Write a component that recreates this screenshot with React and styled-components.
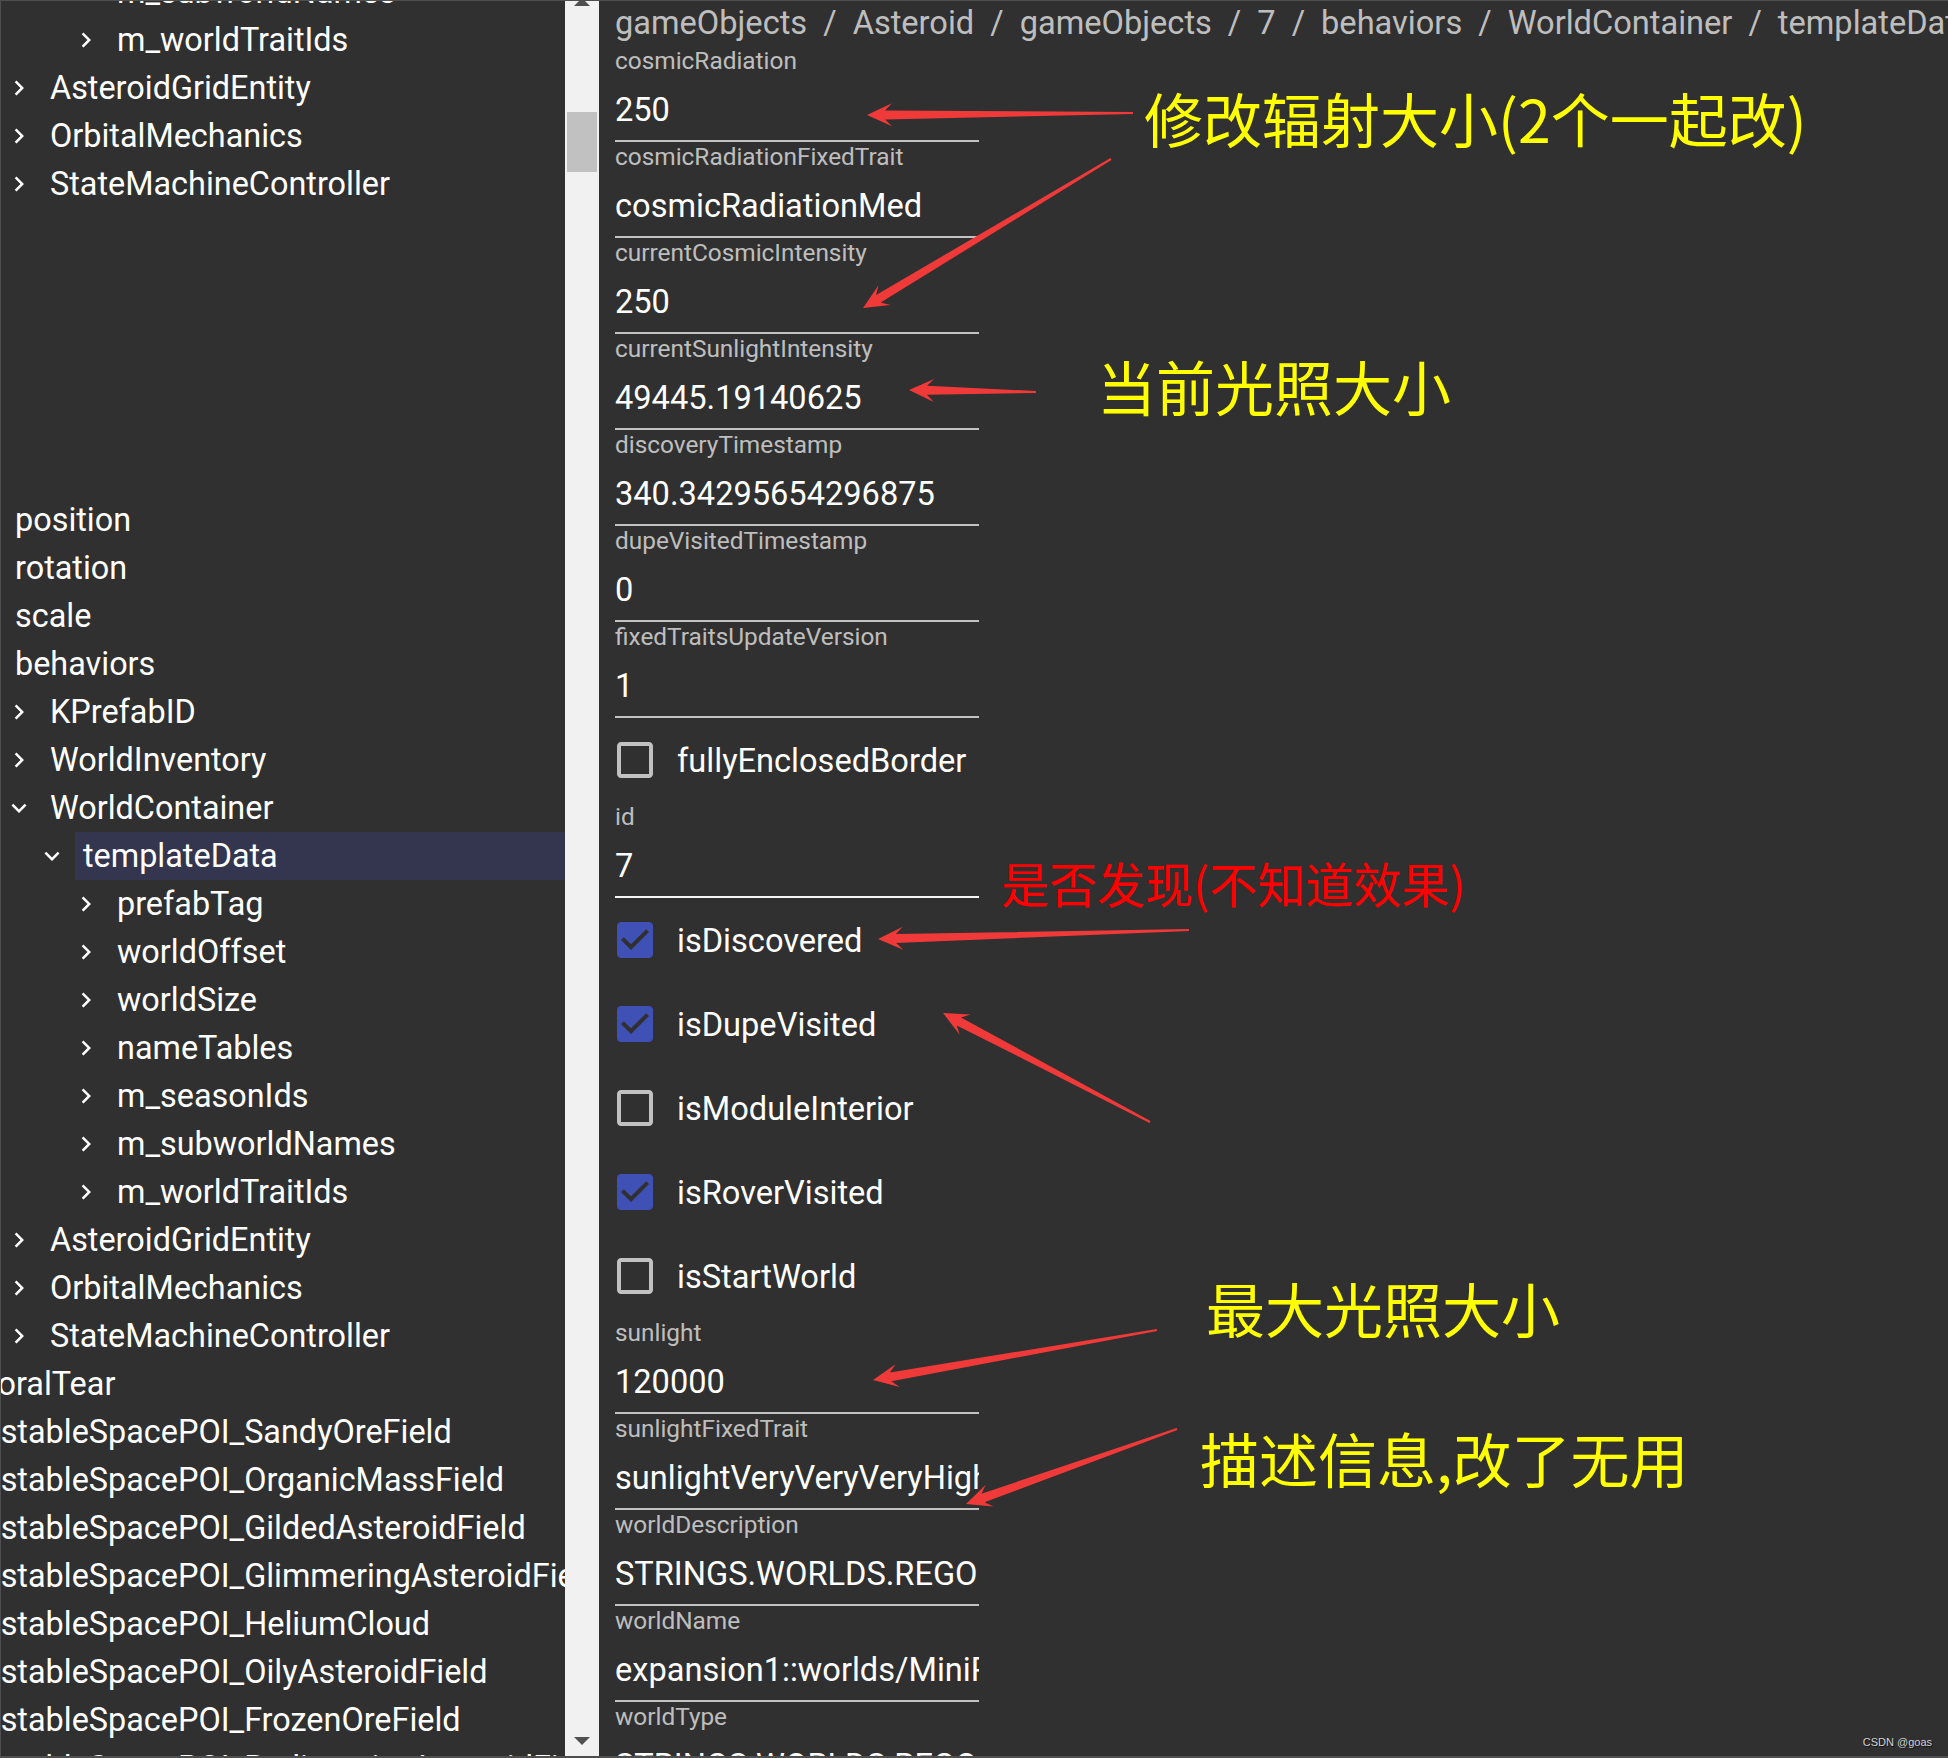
import React from 'react';
import styled, { createGlobalStyle } from 'styled-components';

const GlobalStyle = createGlobalStyle`
  html, body {
    margin: 0;
    padding: 0;
    background: #303030;
  }
  body {
    font-family: Roboto, "Noto Sans", "Liberation Sans", sans-serif;
  }
`;

const Page = styled.div`
  position: relative;
  display: flex;
  width: 1948px;
  height: 1758px;
  box-sizing: border-box;
  border-top: 1px solid #4f4f4f;
  border-left: 1px solid #4f4f4f;
  border-bottom: 2px solid #4f4f4f;
  background: #303030;
  color: #fff;
  overflow: hidden;
`;

/* ---------- left tree ---------- */

const TreePanel = styled.div`
  flex: none;
  width: 564px;
  display: flex;
  flex-direction: column;
  overflow: hidden;
`;

const TreeList = styled.div`
  display: flex;
  flex-direction: column;
  margin-top: ${(p) => p.$offset || 0}px;
`;

const Row = styled.div`
  flex: none;
  display: flex;
  align-items: center;
  height: 48px;
  margin-left: ${(p) => p.$x - 47}px;
  white-space: nowrap;
`;

const Toggle = styled.span`
  flex: none;
  width: 30px;
  height: 48px;
  margin-right: 8px;
  display: flex;
  align-items: center;
  justify-content: center;

  svg {
    width: 32px;
    height: 32px;
    fill: #fff;
  }
`;

const RowLabel = styled.span`
  flex: 1;
  padding-left: 8px;
  font-size: 32.4px;
  line-height: 48px;
  height: 48px;
  color: #fff;
  background: ${(p) => (p.$selected ? '#33364e' : 'transparent')};
`;

const Gap = styled.div`
  flex: none;
  height: ${(p) => p.$h}px;
`;

/* ---------- scrollbar ---------- */

const ScrollTrack = styled.div`
  flex: none;
  width: 34px;
  background: #f1f1f1;
  display: flex;
  flex-direction: column;
  align-items: center;
`;

const ArrowUp = styled.div`
  margin-top: -3px;
  width: 0;
  height: 0;
  border-left: 8px solid transparent;
  border-right: 8px solid transparent;
  border-bottom: 8px solid #505050;
`;

const Thumb = styled.div`
  margin-top: 106px;
  width: 30px;
  height: 60px;
  background: #c1c1c1;
`;

const ArrowDown = styled.div`
  margin-top: auto;
  margin-bottom: 11px;
  width: 0;
  height: 0;
  border-left: 8px solid transparent;
  border-right: 8px solid transparent;
  border-top: 8px solid #505050;
`;

/* ---------- right form ---------- */

const Main = styled.div`
  flex: 1;
  min-width: 0;
  padding-left: 16px;
  display: flex;
  flex-direction: column;
  overflow: hidden;
`;

const Crumbs = styled.div`
  flex: none;
  height: 45px;
  line-height: 44px;
  font-size: 32.6px;
  color: rgba(255, 255, 255, 0.7);
  white-space: nowrap;
  display: flex;
`;

const Sep = styled.span`
  margin: 0 16px;
`;

const Field = styled.div`
  flex: none;
  width: 364px;
  height: 96px;
  box-sizing: border-box;
  display: flex;
  flex-direction: column;
  border-bottom: 2px solid ${(p) => (p.$active ? '#f4f4f4' : 'rgba(255, 255, 255, 0.7)')};
`;

const FieldLabel = styled.div`
  margin-top: 3px;
  height: 24px;
  font-size: 24.4px;
  line-height: 24px;
  color: rgba(255, 255, 255, 0.7);
  white-space: nowrap;
`;

const FieldValue = styled.div`
  margin-top: 18px;
  height: 38px;
  font-size: 32.6px;
  line-height: 38px;
  color: #fff;
  white-space: nowrap;
  overflow: hidden;
`;

const CheckRow = styled.label`
  flex: none;
  display: flex;
  align-items: center;
  height: 84px;
  margin-left: -22px;
  font-size: 32.6px;
  color: #fff;
`;

const CheckText = styled.span`
  padding-top: 2px;
`;

const CheckButton = styled.span`
  flex: none;
  width: 84px;
  height: 84px;
  display: flex;
  align-items: center;
  justify-content: center;

  svg {
    width: 48px;
    height: 48px;
    fill: ${(p) => (p.$checked ? '#3f51b5' : 'rgba(255, 255, 255, 0.7)')};
  }
`;

/* ---------- annotations over the screenshot ---------- */

const Notes = styled.div`
  position: absolute;
  inset: 0;
  pointer-events: none;
`;

const Note = styled.span`
  position: absolute;
  left: ${(p) => p.$x}px;
  top: ${(p) => p.$y - p.$size * 0.6}px;
  font-family: "Noto Sans CJK SC", "Noto Sans", sans-serif;
  font-size: ${(p) => p.$size}px;
  line-height: 1;
  color: ${(p) => p.$color};
  white-space: nowrap;
`;

const ArrowLayer = styled.svg`
  position: absolute;
  left: 0;
  top: 0;
`;

const Watermark = styled.span`
  position: absolute;
  right: 16px;
  bottom: 8px;
  font-family: "Liberation Sans", Arial, sans-serif;
  font-size: 11px;
  color: #d2d2d2;
  text-shadow: 1px 1px 1px #111;
`;

const ChevronRight = () => (
  <svg viewBox="0 0 24 24">
    <path d="M10 6L8.59 7.41 13.17 12l-4.58 4.59L10 18l6-6z" />
  </svg>
);

const ExpandMore = () => (
  <svg viewBox="0 0 24 24">
    <path d="M16.59 8.59L12 13.17 7.41 8.59 6 10l6 6 6-6z" />
  </svg>
);

const CheckIcon = ({ checked }) => (
  <svg viewBox="0 0 24 24">
    {checked ? (
      <path
        fillRule="evenodd"
        d="M19 3H5c-1.11 0-2 .9-2 2v14c0 1.1.89 2 2 2h14c1.11 0 2-.9 2-2V5c0-1.1-.89-2-2-2zm-9 14l-5-5 1.41-1.41L10 14.17l7.59-7.59L19 8l-9 9z"
      />
    ) : (
      <path d="M19 5v14H5V5h14m0-2H5c-1.1 0-2 .9-2 2v14c0 1.1.9 2 2 2h14c1.1 0 2-.9 2-2V5c0-1.1-.9-2-2-2z" />
    )}
  </svg>
);

const topRows = [
  { x: 117, arrow: 'right', text: 'm_subworldNames' },
  { x: 117, arrow: 'right', text: 'm_worldTraitIds' },
  { x: 50, arrow: 'right', text: 'AsteroidGridEntity' },
  { x: 50, arrow: 'right', text: 'OrbitalMechanics' },
  { x: 50, arrow: 'right', text: 'StateMachineController' },
];

const mainRows = [
  { x: 15, text: 'position' },
  { x: 15, text: 'rotation' },
  { x: 15, text: 'scale' },
  { x: 15, text: 'behaviors' },
  { x: 50, arrow: 'right', text: 'KPrefabID' },
  { x: 50, arrow: 'right', text: 'WorldInventory' },
  { x: 50, arrow: 'down', text: 'WorldContainer' },
  { x: 83, arrow: 'down', text: 'templateData', selected: true },
  { x: 117, arrow: 'right', text: 'prefabTag' },
  { x: 117, arrow: 'right', text: 'worldOffset' },
  { x: 117, arrow: 'right', text: 'worldSize' },
  { x: 117, arrow: 'right', text: 'nameTables' },
  { x: 117, arrow: 'right', text: 'm_seasonIds' },
  { x: 117, arrow: 'right', text: 'm_subworldNames' },
  { x: 117, arrow: 'right', text: 'm_worldTraitIds' },
  { x: 50, arrow: 'right', text: 'AsteroidGridEntity' },
  { x: 50, arrow: 'right', text: 'OrbitalMechanics' },
  { x: 50, arrow: 'right', text: 'StateMachineController' },
  { x: -84, text: 'TemporalTear' },
  { x: -84, text: 'HarvestableSpacePOI_SandyOreField' },
  { x: -84, text: 'HarvestableSpacePOI_OrganicMassField' },
  { x: -84, text: 'HarvestableSpacePOI_GildedAsteroidField' },
  { x: -84, text: 'HarvestableSpacePOI_GlimmeringAsteroidField' },
  { x: -84, text: 'HarvestableSpacePOI_HeliumCloud' },
  { x: -84, text: 'HarvestableSpacePOI_OilyAsteroidField' },
  { x: -84, text: 'HarvestableSpacePOI_FrozenOreField' },
  { x: -84, text: 'HarvestableSpacePOI_RadioactiveAsteroidField' },
];

const crumbs = ['gameObjects', 'Asteroid', 'gameObjects', '7', 'behaviors', 'WorldContainer', 'templateData'];

// kind: f = text field, c = checkbox
const form = [
  { kind: 'f', label: 'cosmicRadiation', value: '250' },
  { kind: 'f', label: 'cosmicRadiationFixedTrait', value: 'cosmicRadiationMed' },
  { kind: 'f', label: 'currentCosmicIntensity', value: '250' },
  { kind: 'f', label: 'currentSunlightIntensity', value: '49445.19140625' },
  { kind: 'f', label: 'discoveryTimestamp', value: '340.34295654296875' },
  { kind: 'f', label: 'dupeVisitedTimestamp', value: '0' },
  { kind: 'f', label: 'fixedTraitsUpdateVersion', value: '1' },
  { kind: 'c', label: 'fullyEnclosedBorder', checked: false },
  { kind: 'f', label: 'id', value: '7', active: true },
  { kind: 'c', label: 'isDiscovered', checked: true },
  { kind: 'c', label: 'isDupeVisited', checked: true },
  { kind: 'c', label: 'isModuleInterior', checked: false },
  { kind: 'c', label: 'isRoverVisited', checked: true },
  { kind: 'c', label: 'isStartWorld', checked: false },
  { kind: 'f', label: 'sunlight', value: '120000' },
  { kind: 'f', label: 'sunlightFixedTrait', value: 'sunlightVeryVeryVeryHigh' },
  { kind: 'f', label: 'worldDescription', value: 'STRINGS.WORLDS.REGOLITHMOONLET.DESCRIPTION' },
  { kind: 'f', label: 'worldName', value: 'expansion1::worlds/MiniRegolithMoonlet' },
  { kind: 'f', label: 'worldType', value: 'STRINGS.WORLDS.REGOLITHMOONLET.NAME' },
];

const notes = [
  { x: 1143, y: 122, size: 59, color: '#ffff00', text: '修改辐射大小(2个一起改)' },
  { x: 1096, y: 390, size: 59, color: '#ffff00', text: '当前光照大小' },
  { x: 1000, y: 886, size: 48, color: '#ff0000', text: '是否发现(不知道效果)' },
  { x: 1205, y: 1312, size: 59, color: '#ffff00', text: '最大光照大小' },
  { x: 1199, y: 1462, size: 59, color: '#ffff00', text: '描述信息,改了无用' },
];

// tail -> head
const arrows = [
  [1132, 112, 866, 114],
  [1110, 158, 862, 307],
  [1035, 391, 908, 389],
  [1188, 929, 877, 938],
  [1149, 1121, 942, 1012],
  [1156, 1329, 872, 1379],
  [1176, 1428, 965, 1503],
];

function arrowShape(tx, ty, hx, hy) {
  const dx = hx - tx;
  const dy = hy - ty;
  const len = Math.hypot(dx, dy);
  const ux = dx / len;
  const uy = dy / len;
  const nx = -uy;
  const ny = ux;
  const at = (d, w) => `${(hx - ux * d + nx * w).toFixed(1)},${(hy - uy * d + ny * w).toFixed(1)}`;
  return [
    at(len, 1),
    at(18, 4.5),
    at(25, 11.5),
    at(0, 0),
    at(25, -11.5),
    at(18, -4.5),
    at(len, -1),
  ].join(' ');
}

const TreeRow = ({ row }) => (
  <Row $x={row.x}>
    <Toggle>
      {row.arrow === 'right' && <ChevronRight />}
      {row.arrow === 'down' && <ExpandMore />}
    </Toggle>
    <RowLabel $selected={row.selected}>{row.text}</RowLabel>
  </Row>
);

export default function App() {
  return (
    <>
      <GlobalStyle />
      <Page>
        <TreePanel>
          <TreeList $offset={-33}>
            {topRows.map((r, i) => (
              <TreeRow key={'t' + i} row={r} />
            ))}
            <Gap $h={288} />
            {mainRows.map((r, i) => (
              <TreeRow key={'m' + i} row={r} />
            ))}
          </TreeList>
        </TreePanel>

        <ScrollTrack>
          <ArrowUp />
          <Thumb />
          <ArrowDown />
        </ScrollTrack>

        <Main>
          <Crumbs>
            {crumbs.map((c, i) => (
              <React.Fragment key={i}>
                {i > 0 && <Sep>/</Sep>}
                <span>{c}</span>
              </React.Fragment>
            ))}
          </Crumbs>
          {form.map((f) =>
            f.kind === 'f' ? (
              <Field key={f.label} $active={f.active}>
                <FieldLabel>{f.label}</FieldLabel>
                <FieldValue>{f.value}</FieldValue>
              </Field>
            ) : (
              <CheckRow key={f.label}>
                <CheckButton $checked={f.checked}>
                  <CheckIcon checked={f.checked} />
                </CheckButton>
                <CheckText>{f.label}</CheckText>
              </CheckRow>
            )
          )}
        </Main>

        <Notes>
          <ArrowLayer width="1948" height="1758" viewBox="0 0 1948 1758">
            {arrows.map((a, i) => (
              <polygon key={i} points={arrowShape(...a)} fill="#f03a3a" />
            ))}
          </ArrowLayer>
          {notes.map((n, i) => (
            <Note key={i} $x={n.x} $y={n.y} $size={n.size} $color={n.color}>
              {n.text}
            </Note>
          ))}
          <Watermark>CSDN @goas</Watermark>
        </Notes>
      </Page>
    </>
  );
}
